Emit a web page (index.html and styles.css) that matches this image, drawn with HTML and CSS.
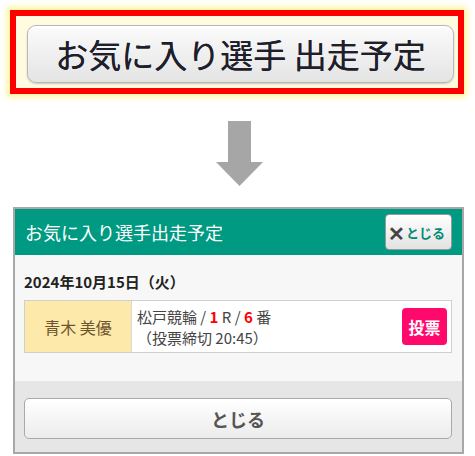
FILE: index.html
```html
<!DOCTYPE html>
<html lang="ja">
  <head>
    <meta charset="UTF-8" />
    <meta name="viewport" content="width=device-width, initial-scale=1.0" />
    <title>お気に入り選手出走予定</title>
    <link rel="stylesheet" href="styles.css">
  </head>
  <body>
    <div class="banner">
      <div class="banner-btn">お気に入り選手 出走予定</div>
    </div>

    <div class="arrow">
      <svg width="47" height="66" viewBox="0 0 47 66">
        <polygon points="12,0 35,0 35,41 47,41 23.5,65 0,41 12,41" fill="#a6a6a6" />
      </svg>
    </div>

    <section class="modal">
      <header class="modal-head">
        <h1>お気に入り選手出走予定</h1>
        <button class="close-small"><span class="x">✕</span>とじる</button>
      </header>

      <div class="modal-body">
        <p class="date">2024年10月15日（火）</p>
        <div class="race">
          <div class="name">青木 美優</div>
          <div class="info">
            <p>松戸競輪 / <b>1</b> R / <b>6</b> 番</p>
            <p>（投票締切 20:45）</p>
          </div>
          <button class="vote">投票</button>
        </div>
      </div>

      <footer class="modal-foot">
        <button class="close-big">とじる</button>
      </footer>
    </section>
  </body>
</html>
```

FILE: styles.css
```css
body {
  margin: 0;
  font-family: "Noto Sans CJK JP", "Noto Sans", sans-serif;
  color: #333;
}

p {
  margin: 0;
}

button {
  font-family: inherit;
  cursor: pointer;
}

.banner {
  margin: 10px 0 0 10px;
  border: 6px solid #ff0000;
  background: #fffbe0;
  box-shadow: 0 0 6px 3px #fff59a;
  padding: 9px 4px 0 11px;
  width: 427px;
  height: 63px;
}

.banner-btn {
  height: 56px;
  border: 1px solid #b8b8b8;
  border-radius: 9px;
  background: linear-gradient(#fbfbfb, #e4e4e4);
  box-shadow: inset 0 2px 1px #fff, 0 1px 2px #c8c8b0;
  font-size: 33px;
  line-height: 56px;
  text-align: center;
  color: #1f1f2c;
  text-shadow: 0 0 0.6px #1f1f2c;
}

.arrow {
  display: flex;
  justify-content: center;
  padding: 27px 0 0 1px;
  height: 86px;
}

.arrow svg {
  margin-left: 2px;
}

.modal {
  margin-left: 13px;
  width: 447px;
  border: 2px solid #a8a8a8;
  background: #f7f7f7;
}

.modal-head {
  display: flex;
  align-items: center;
  justify-content: space-between;
  height: 46px;
  background: #009a82;
  padding: 0 10px;
}

.modal-head h1 {
  margin: 0;
  font-size: 18px;
  font-weight: normal;
  color: #fff;
}

.close-small {
  height: 36px;
  width: 67px;
  padding: 0 0 0 2px;
  border: 1px solid #999;
  border-radius: 4px;
  background: linear-gradient(#ffffff, #e2e2e2);
  color: #008a74;
  font-size: 13px;
  font-weight: bold;
  display: flex;
  align-items: center;
}

.close-small .x {
  color: #444;
  font-size: 20px;
  margin-right: 1px;
}

.modal-body {
  padding: 15px 10px 28px 9px;
}

.date {
  font-size: 15px;
  font-weight: bold;
  color: #222;
  margin-bottom: 7px;
  line-height: 23px;
}

.race {
  display: flex;
  align-items: center;
  height: 51px;
  border: 1px solid #cfcfcf;
  background: #fff;
}

.name {
  align-self: stretch;
  width: 106px;
  background: #fde9aa;
  border-right: 1px solid #d8d8d8;
  display: flex;
  align-items: center;
  justify-content: center;
  font-size: 16px;
  color: #6e5530;
}

.info {
  flex: 1;
  padding-left: 5px;
  font-size: 15px;
  line-height: 21px;
  color: #444;
}

.info b {
  color: #f00;
}

.vote {
  width: 45px;
  height: 37px;
  margin-right: 4px;
  border: none;
  border-radius: 4px;
  background: #ff0a6c;
  color: #fff;
  font-size: 16px;
  font-weight: bold;
  padding: 0;
}

.modal-foot {
  background: #e6e6e6;
  padding: 17px 10px 13px 9px;
}

.close-big {
  display: block;
  width: 100%;
  height: 41px;
  border: 1px solid #a9a9a9;
  border-radius: 5px;
  background: linear-gradient(#ffffff, #ececec);
  font-size: 18px;
  font-weight: bold;
  color: #555;
}
```
